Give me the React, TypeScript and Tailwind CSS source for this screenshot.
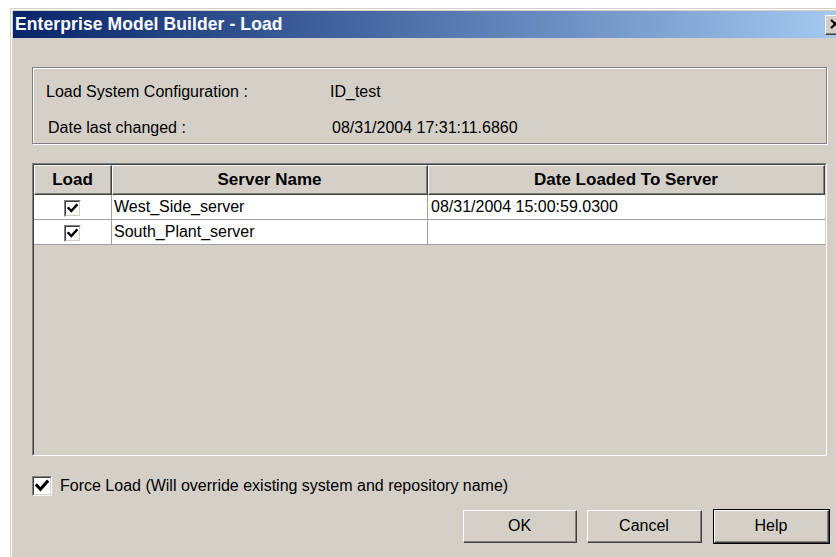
import React from 'react'

const font = { fontFamily: '"Liberation Sans", Arial, sans-serif' }

// classic 3D check box with a sunken frame
function CheckBox({ size = 17, checked = true }: { size?: number; checked?: boolean }) {
  return (
    <div
      className="border-t border-l border-[#808080] border-r border-b border-r-white border-b-white"
      style={{ width: size, height: size }}
    >
      <div className="w-full h-full border-t border-l border-[#404040] border-r border-b border-r-[#d4d0c8] border-b-[#d4d0c8] bg-white flex items-center justify-center">
        {checked && (
          <svg width={size - 6} height={size - 6} viewBox="0 0 9 9">
            <path d="M1.2 4.2 L3.5 6.6 L7.8 1.8" stroke="#000" strokeWidth="2" fill="none" strokeLinecap="square" />
          </svg>
        )}
      </div>
    </div>
  )
}

function Win98Button({ label, isDefault = false, width }: { label: string; isDefault?: boolean; width: number }) {
  return (
    <div
      className={isDefault ? 'border border-black' : 'border border-transparent'}
      style={{ width }}
    >
      <div className="h-[33px] border-t border-l border-white border-r border-b border-r-[#404040] border-b-[#404040] bg-[#d4d0c8]">
        <div className="h-full border-r border-b border-r-[#808080] border-b-[#808080] flex items-center justify-center text-[16px] text-black">
          {label}
        </div>
      </div>
    </div>
  )
}

function HeaderCell({ label, width }: { label: string; width: number }) {
  return (
    <div
      className="h-[30px] shrink-0 border-t border-l border-white border-r border-b border-r-[#404040] border-b-[#404040] bg-[#d4d0c8]"
      style={{ width }}
    >
      <div className="h-full border-r border-b border-r-[#808080] border-b-[#808080] flex items-center justify-center text-[17px] font-bold text-black">
        {label}
      </div>
    </div>
  )
}

const servers = [
  { name: 'West_Side_server', loaded: '08/31/2004 15:00:59.0300' },
  { name: 'South_Plant_server', loaded: '' },
]

export default function App() {
  return (
    <div className="w-[836px] h-[557px] bg-white overflow-hidden" style={font}>
      {/* dialog frame */}
      <div className="ml-[10px] mt-[8px] w-[834px] h-[560px] border-l border-t border-[#d4d0c8] bg-[#d4d0c8]">
        <div className="h-full border-l border-t border-white pl-[1px] pt-[1px]">
          {/* title bar */}
          <div className="h-[27px] flex items-center bg-gradient-to-r from-[#0a246a] to-[#a6caf0] pl-[2px]">
            <span className="text-white font-bold text-[17.5px] tracking-[0.1px]">Enterprise Model Builder - Load</span>
            <div className="flex-1" />
            <div className="w-[22px] h-[20px] mr-[-3px] border-t border-l border-white border-r border-b border-r-[#404040] border-b-[#404040] bg-[#d4d0c8]">
              <div className="h-full border-r border-b border-r-[#808080] border-b-[#808080] flex items-center justify-center">
                <svg width="11" height="10" viewBox="0 0 11 10">
                  <path d="M1 1 L10 9 M10 1 L1 9" stroke="#000" strokeWidth="2.3" />
                </svg>
              </div>
            </div>
          </div>

          {/* body */}
          <div className="pl-[19px] pt-[29px] text-black">
            {/* configuration group */}
            <div className="w-[795px] h-[77px] border border-[#808080] shadow-[inset_1px_1px_0_#fff,1px_1px_0_#fff] pt-[14px] text-[16px]">
              <div className="flex h-[19px] items-center pl-[13px]">
                <span className="w-[284px]">Load System Configuration :</span>
                <span>ID_test</span>
              </div>
              <div className="flex h-[19px] items-center pl-[15px] mt-[17px]">
                <span className="w-[284px]">Date last changed :</span>
                <span>08/31/2004 17:31:11.6860</span>
              </div>
            </div>

            {/* server grid */}
            <div className="w-[795px] h-[293px] mt-[19px] border-t border-l border-[#808080] border-r border-b border-r-white border-b-white">
              <div className="h-full border-t border-l border-[#404040] border-r border-b border-r-[#d4d0c8] border-b-[#d4d0c8] bg-[#d4d0c8]">
                <div className="flex">
                  <HeaderCell label="Load" width={78} />
                  <HeaderCell label="Server Name" width={316} />
                  <HeaderCell label="Date Loaded To Server" width={397} />
                </div>
                {servers.map((s) => (
                  <div key={s.name} className="flex h-[25px] bg-white border-b border-[#a0a0a0] text-[16px]">
                    <div className="w-[78px] shrink-0 border-r border-[#a0a0a0] flex items-center justify-center pt-[2px]">
                      <CheckBox size={17} />
                    </div>
                    <div className="w-[316px] shrink-0 border-r border-[#a0a0a0] flex items-center pl-[2px]">
                      {s.name}
                    </div>
                    <div className="flex-1 flex items-center pl-[3px]">{s.loaded}</div>
                  </div>
                ))}
              </div>
            </div>

            {/* force load option */}
            <div className="flex items-center mt-[20px] h-[20px] text-[16px]">
              <CheckBox size={20} />
              <span className="ml-[8px]">Force Load (Will override existing system and repository name)</span>
            </div>

            {/* dialog buttons */}
            <div className="flex w-[798px] justify-end mt-[13px]">
              <Win98Button label="OK" width={116} />
              <div className="w-[8px]" />
              <Win98Button label="Cancel" width={117} />
              <div className="w-[10px]" />
              <Win98Button label="Help" width={117} isDefault />
            </div>
          </div>
        </div>
      </div>
    </div>
  )
}
